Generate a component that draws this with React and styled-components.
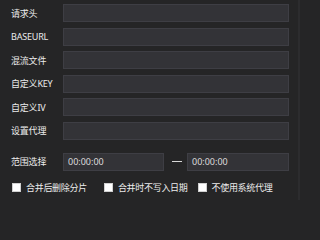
import React from "react";
import styled, { createGlobalStyle } from "styled-components";

const GlobalStyle = createGlobalStyle`
  html, body {
    margin: 0;
    padding: 0;
    background: #252526;
  }
  * {
    box-sizing: border-box;
  }
`;

const Panel = styled.div`
  width: 300px;
  height: 200px;
  background: #252526;
  border-right: 2px solid #2c2c2e;
  padding: 4px 0 0 11px;
  font-family: "Noto Sans", "Noto Sans CJK SC", sans-serif;
  font-size: 9px;
  color: #ececec;
  overflow: hidden;
`;

const Fields = styled.div`
  display: grid;
  grid-template-columns: 52px 226px;
  row-gap: 5.6px;
`;

const Label = styled.label`
  display: flex;
  align-items: center;
  height: 18px;
  white-space: nowrap;
  letter-spacing: -0.2px;
`;

const Field = styled.div`
  height: 18px;
  background: #333337;
  border: 1px solid #3e3e44;
  color: #dcdcdc;
  display: flex;
  align-items: center;
  padding-left: ${(p) => p.$pad || 0}px;
`;

const RangeRow = styled.div`
  display: grid;
  grid-template-columns: 52px 101px 23px 102px;
  align-items: center;
  margin-top: 13px;
`;

const Dash = styled.div`
  justify-self: center;
  width: 10px;
  height: 1px;
  background: #d8d8d8;
  margin-left: 2px;
`;

const Checks = styled.div`
  display: flex;
  align-items: center;
  margin-top: 10px;
  margin-left: 1px;
`;

const Check = styled.div`
  display: flex;
  align-items: center;
  gap: 5px;
  margin-right: ${(p) => p.$gap}px;
  white-space: nowrap;
  letter-spacing: -0.3px;
`;

const Box = styled.span`
  width: 9px;
  height: 9px;
  background: #ffffff;
  border: 1px solid #d0d0d0;
  flex: none;
`;

const rows = ["请求头", "BASEURL", "混流文件", "自定义KEY", "自定义IV", "设置代理"];

export default function App() {
  return (
    <>
      <GlobalStyle />
      <Panel>
        <Fields>
          {rows.map((r) => (
            <React.Fragment key={r}>
              <Label>{r}</Label>
              <Field />
            </React.Fragment>
          ))}
        </Fields>
        <RangeRow>
          <Label>范围选择</Label>
          <Field $pad={4}>00:00:00</Field>
          <Dash />
          <Field $pad={4}>00:00:00</Field>
        </RangeRow>
        <Checks>
          <Check $gap={17}>
            <Box />
            合并后删除分片
          </Check>
          <Check $gap={10}>
            <Box />
            合并时不写入日期
          </Check>
          <Check $gap={0}>
            <Box />
            不使用系统代理
          </Check>
        </Checks>
      </Panel>
    </>
  );
}
